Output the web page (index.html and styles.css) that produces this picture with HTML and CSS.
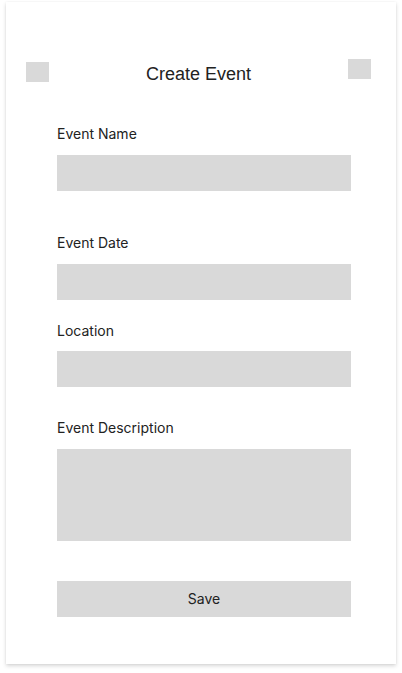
FILE: index.html
```html
<!DOCTYPE html>
<html>
<head>
<meta charset="utf-8">
<link rel="stylesheet" href="styles.css">
</head>
<body>
<div class="card">
  <div class="header">
    <div class="icon icon-left"></div>
    <div class="title">Create Event</div>
    <div class="icon icon-right"></div>
  </div>
  <div class="form">
    <div class="label l1">Event Name</div>
    <div class="field f1"></div>
    <div class="label l2">Event Date</div>
    <div class="field f2"></div>
    <div class="label l3">Location</div>
    <div class="field f3"></div>
    <div class="label l4">Event Description</div>
    <div class="field area"></div>
    <div class="save">Save</div>
  </div>
</div>
</body>
</html>
```
FILE: styles.css
```css
html, body {
  margin: 0;
  padding: 0;
  background: #ffffff;
}
body {
  padding: 2px 6px 9px 6px;
}
.card {
  width: 390px;
  height: 662px;
  background: #ffffff;
  box-shadow: 0 2px 4px rgba(0, 0, 0, 0.16), 0 0 2px rgba(0, 0, 0, 0.05);
  box-sizing: border-box;
}
.header {
  display: flex;
  justify-content: space-between;
  align-items: flex-start;
  padding: 57px 25px 0 20px;
}
.icon {
  width: 23px;
  height: 20px;
  background: #d9d9d9;
}
.icon-left {
  margin-top: 3px;
}
.title {
  margin-top: 4px;
  font-family: "Liberation Sans", Arial, sans-serif;
  font-size: 18px;
  line-height: 22px;
  color: #222222;
}
.form {
  display: flex;
  flex-direction: column;
  padding: 0 45px 0 51px;
}
.label {
  font-family: Inter, "Noto Sans", sans-serif;
  font-size: 14px;
  line-height: 17px;
  color: #222222;
}
.l1 { margin-top: 40px; }
.l2 { margin-top: 43px; }
.l3 { margin-top: 22px; }
.l4 { margin-top: 32px; }
.field {
  height: 36px;
  background: #d9d9d9;
  margin-top: 13px;
}
.f3 { margin-top: 12px; }
.area {
  height: 92px;
}
.save {
  margin-top: 40px;
  height: 36px;
  background: #d9d9d9;
  display: flex;
  align-items: center;
  justify-content: center;
  font-family: Inter, "Noto Sans", sans-serif;
  font-size: 14px;
  line-height: 17px;
  padding-bottom: 1px;
  box-sizing: border-box;
  color: #222222;
}
```
